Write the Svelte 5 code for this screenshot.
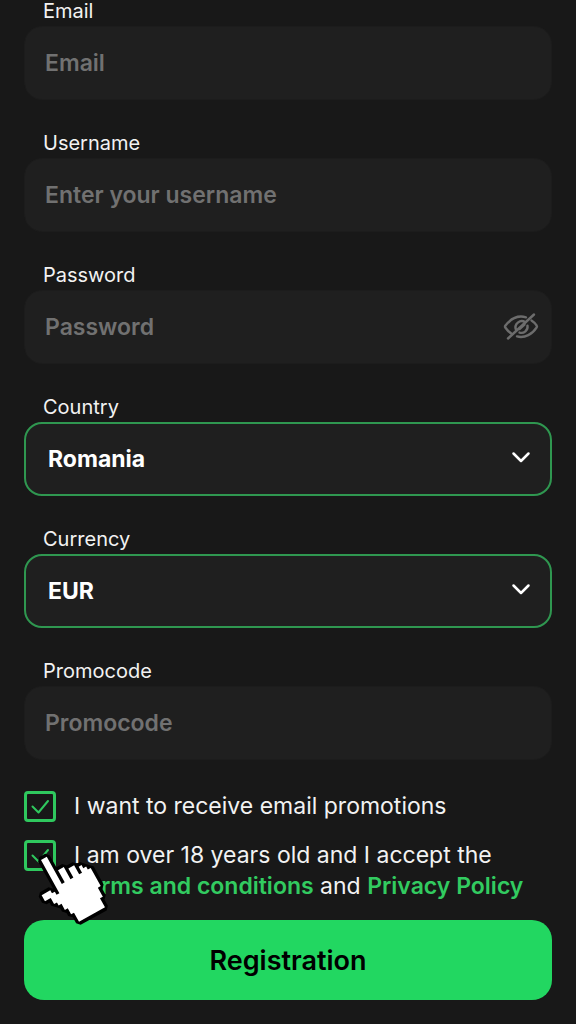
<script>
	let email = $state('');
	let username = $state('');
	let password = $state('');
	let promocode = $state('');
	let country = $state('Romania');
	let currency = $state('EUR');
	let promotions = $state(true);
	let accepted = $state(true);
	let showPassword = $state(false);
</script>

{#snippet chevron()}
	<svg class="chevron" viewBox="0 0 20 12" aria-hidden="true">
		<path d="M2.5 2.5 10 10 17.5 2.5" />
	</svg>
{/snippet}

<main>
	<form onsubmit={(event) => event.preventDefault()}>
		<div class="fields">
			<div class="field">
				<label for="email">Email</label>
				<input class="box" id="email" type="email" placeholder="Email" bind:value={email}>
			</div>

			<div class="field">
				<label for="username">Username</label>
				<input class="box" id="username" type="text" placeholder="Enter your username" bind:value={username}>
			</div>

			<div class="field">
				<label for="password">Password</label>
				<div class="control">
					<input class="box" id="password" type={showPassword ? 'text' : 'password'} placeholder="Password" bind:value={password}>
					<button class="eye" type="button" aria-label="Show password" onclick={() => (showPassword = !showPassword)}>
						<svg viewBox="0 0 36 28" aria-hidden="true">
							<path d="M23 4.3C14 1.8 7 6.5 2.3 12.8a1.5 1.5 0 0 0 0 1.7C4 17 5.8 18.8 8 20.3" />
							<path d="M28.5 7.5c2.2 1.4 4 3.2 5.2 5.2a1.5 1.5 0 0 1 0 1.7C29.5 21 22 25.5 14 23.4" />
							<path d="M22.3 9.2a6.3 6.3 0 0 0-9.3 7.6M16.5 19.6a6.3 6.3 0 0 0 8-7" />
							<path d="M31 1.5 5 25.5M21.5 11.5l-5 4.5" />
						</svg>
					</button>
				</div>
			</div>

			<div class="field">
				<label for="country">Country</label>
				<div class="control">
					<select class="box" id="country" bind:value={country}>
						<option>Romania</option>
					</select>
					{@render chevron()}
				</div>
			</div>

			<div class="field">
				<label for="currency">Currency</label>
				<div class="control">
					<select class="box" id="currency" bind:value={currency}>
						<option>EUR</option>
					</select>
					{@render chevron()}
				</div>
			</div>

			<div class="field">
				<label for="promocode">Promocode</label>
				<input class="box" id="promocode" type="text" placeholder="Promocode" bind:value={promocode}>
			</div>
		</div>

		<div class="checks">
			<div class="check">
				<span class="tick">
					<input id="promotions" type="checkbox" bind:checked={promotions}>
					<svg viewBox="0 0 32 31" aria-hidden="true"><path d="M8.5 15.5 14.5 21.5 24 10" /></svg>
				</span>
				<label for="promotions">I want to receive email promotions</label>
			</div>
			<div class="check">
				<span class="tick">
					<input id="accepted" type="checkbox" bind:checked={accepted}>
					<svg viewBox="0 0 32 31" aria-hidden="true"><path d="M8.5 15.5 14.5 21.5 24 10" /></svg>
					<!-- pixel hand pointing at the box -->
					<svg class="hand" viewBox="0 0 76 80" aria-hidden="true">
						<path
							transform="translate(7 13) rotate(-29) scale(3.3 3.45)"
							d="M0 0H2V9H3V5H5V9H6V6H8V9H9V7H10V8H11V9H12V15H11V18H10V21H1V18H0V16H-1V14H-2V13H-3V11H-5V9H-2V10H-1V11H0Z"
						/>
					</svg>
				</span>
				<label for="accepted">
					I am over 18 years old and I accept the <a href="#terms">Terms and conditions</a> and <a href="#privacy">Privacy Policy</a>
				</label>
			</div>
		</div>

		<button class="submit" type="submit">Registration</button>
	</form>
</main>

<style>
	:global(body) {
		margin: 0;
		background: #181818;
	}

	main {
		padding: 0 24px 24px;
		color: #f2f2f2;
		font-family: Inter, sans-serif;
	}

	.fields {
		display: flex;
		flex-direction: column;
		gap: 32px;
		margin-bottom: 31px;
	}

	.field {
		display: flex;
		flex-direction: column;
	}

	.field label {
		margin: 0 0 4px 19px;
		font-size: 20px;
		line-height: 22px;
	}

	.control {
		display: grid;
		align-items: center;
	}

	.control > :global(*) {
		grid-area: 1 / 1;
	}

	.box {
		box-sizing: border-box;
		width: 100%;
		height: 74px;
		padding: 0 20px;
		border: 1px solid #1c1c1c;
		border-radius: 18px;
		outline: none;
		background: #1f1f1f;
		color: #fff;
		font-family: inherit;
		font-size: 23px;
		font-weight: 600;
	}

	.box::placeholder {
		color: #717171;
		opacity: 1;
	}

	select.box {
		appearance: none;
		padding: 0 22px;
		border: 2px solid #2f9750;
		font-weight: 700;
	}

	svg {
		fill: none;
		stroke-linecap: round;
		stroke-linejoin: round;
	}

	.chevron {
		justify-self: end;
		width: 20px;
		height: 12px;
		margin: 0 21px 4px 0;
		stroke: #fff;
		stroke-width: 2.5;
		pointer-events: none;
	}

	.eye {
		justify-self: end;
		margin: 0 13px 0 0;
		padding: 0;
		border: 0;
		background: none;
		cursor: pointer;
	}

	.eye svg {
		display: block;
		width: 36px;
		height: 28px;
		stroke: #6c6c6c;
		stroke-width: 2.4;
	}

	.checks {
		display: flex;
		flex-direction: column;
		gap: 18px;
		margin-bottom: 18px;
	}

	.check {
		display: flex;
		gap: 18px;
	}

	.check label {
		flex: 1;
		font-size: 23px;
		line-height: 31px;
	}

	.tick {
		position: relative;
		display: grid;
		width: 32px;
		height: 31px;
	}

	.tick input {
		grid-area: 1 / 1;
		box-sizing: border-box;
		width: 32px;
		height: 31px;
		margin: 0;
		appearance: none;
		border: 3px solid #2fc85e;
		border-radius: 4px;
	}

	.tick svg {
		grid-area: 1 / 1;
		width: 32px;
		height: 31px;
		stroke: #2fc85e;
		stroke-width: 2;
		pointer-events: none;
	}

	.tick input:not(:checked) + svg {
		visibility: hidden;
	}

	.tick .hand {
		position: absolute;
		top: 7px;
		left: 10px;
		width: 76px;
		height: 80px;
		overflow: visible;
		fill: #fff;
		stroke: #000;
		stroke-linejoin: bevel;
		paint-order: stroke;
	}

	a {
		color: #32cb60;
		font-weight: 600;
		text-decoration: none;
	}

	.submit {
		width: 100%;
		height: 80px;
		border: 0;
		border-radius: 20px;
		background: #22d761;
		color: #000;
		font-family: inherit;
		font-size: 27px;
		font-weight: 600;
	}
</style>
